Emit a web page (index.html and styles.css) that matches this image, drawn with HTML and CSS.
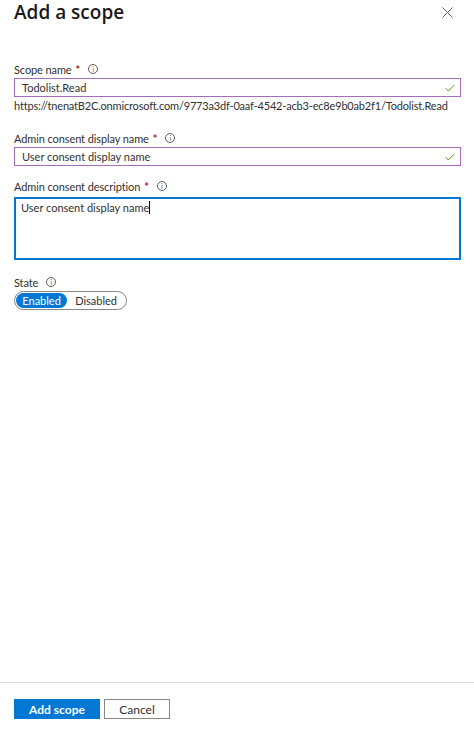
FILE: index.html
```html
<!DOCTYPE html>
<html lang="en">
<head>
    <meta charset="UTF-8">
    <meta name="viewport" content="width=device-width, initial-scale=1.0">
    <title>Add a scope</title>
    <link rel="stylesheet" href="styles.css">
</head>
<body>
    <div class="panel">
        <div class="panel-header">
            <h1 class="title">Add a scope</h1>
            <button class="close-btn" aria-label="Close">
                <svg width="11" height="11" viewBox="0 0 11 11"><path d="M0.5 0.5L10.5 10.5M10.5 0.5L0.5 10.5" stroke="#605e5c" stroke-width="1" fill="none"/></svg>
            </button>
        </div>

        <div class="panel-body">
            <div class="field">
                <label class="label">Scope name <span class="req">*</span> <span class="info">i</span></label>
                <div class="input-box valid">
                    <span class="input-text">Todolist.Read</span>
                    <svg class="check" width="10" height="8" viewBox="0 0 10 8"><path d="M0.6 4.2L3.4 7L9.4 0.8" stroke="#57a300" stroke-width="1" fill="none"/></svg>
                </div>
                <div class="hint">https://tnenatB2C.onmicrosoft.com/9773a3df-0aaf-4542-acb3-ec8e9b0ab2f1/Todolist.Read</div>
            </div>

            <div class="field">
                <label class="label">Admin consent display name <span class="req">*</span> <span class="info">i</span></label>
                <div class="input-box valid">
                    <span class="input-text">User consent display name</span>
                    <svg class="check" width="10" height="8" viewBox="0 0 10 8"><path d="M0.6 4.2L3.4 7L9.4 0.8" stroke="#57a300" stroke-width="1" fill="none"/></svg>
                </div>
            </div>

            <div class="field field-desc">
                <label class="label">Admin consent description <span class="req">*</span> <span class="info">i</span></label>
                <div class="textarea-box">
                    <span class="input-text">User consent display name</span><span class="caret"></span>
                </div>
            </div>

            <div class="field">
                <label class="label">State <span class="info">i</span></label>
                <div class="toggle">
                    <span class="toggle-opt active">Enabled</span>
                    <span class="toggle-opt">Disabled</span>
                </div>
            </div>
        </div>

        <div class="panel-footer">
            <button class="button button-primary">Add scope</button>
            <button class="button button-secondary">Cancel</button>
        </div>
    </div>
</body>
</html>
```

FILE: styles.css
```css
body {
    margin: 0;
    padding: 0;
    font-family: 'Lato', 'Open Sans', Arial, sans-serif;
    font-size: 11px;
    color: #323130;
    background: #fff;
}

.panel {
    width: 474px;
    height: 733px;
    display: flex;
    flex-direction: column;
}

.panel-header {
    display: flex;
    justify-content: space-between;
    align-items: flex-start;
    padding: 0 14px;
    height: 62px;
}

.title {
    margin: 0;
    padding-top: 1px;
    font-family: 'Open Sans', Arial, sans-serif;
    font-size: 19px;
    font-weight: 600;
    line-height: 22px;
    color: #1b1a19;
}

.close-btn {
    border: none;
    background: none;
    padding: 0;
    margin: 7px 7px 0 0;
    cursor: pointer;
    line-height: 0;
}

.panel-body {
    flex: 1;
    padding: 0 13px 0 14px;
}

.field {
    margin-bottom: 15px;
}

.field:first-child {
    margin-bottom: 18px;
}

.field:nth-child(2) {
    margin-bottom: 13px;
}

.label {
    display: flex;
    align-items: center;
    height: 14px;
    margin-bottom: 2px;
    color: #323130;
    letter-spacing: -0.1px;
}

.field-desc .label {
    margin-bottom: 4px;
}

.req {
    color: #a4262c;
    font-weight: 700;
    margin-left: 4px;
}

.info {
    display: inline-flex;
    align-items: center;
    justify-content: center;
    box-sizing: border-box;
    width: 10px;
    height: 10px;
    border: 1px solid #605e5c;
    border-radius: 50%;
    font-size: 7px;
    line-height: 1;
    margin-left: 8px;
    color: #605e5c;
}

.input-box {
    display: flex;
    align-items: center;
    justify-content: space-between;
    height: 17px;
    border: 1px solid #a56dbf;
    padding: 0 5px 0 7px;
}

.input-text {
    color: #323130;
}

.hint {
    margin-top: 2px;
    line-height: 14px;
    white-space: nowrap;
    letter-spacing: -0.18px;
}

.textarea-box {
    box-sizing: border-box;
    height: 63px;
    border: 2px solid #0078d4;
    padding: 2px 5px;
    display: flex;
    align-items: flex-start;
}

.caret {
    display: inline-block;
    width: 1px;
    height: 13px;
    background: #000;
    margin-top: 0;
}

.toggle {
    box-sizing: border-box;
    display: inline-flex;
    border: 1px solid #8a8886;
    border-radius: 10px;
    padding: 1px;
    height: 19px;
    width: 113px;
}

.toggle-opt {
    display: flex;
    align-items: center;
    justify-content: center;
    border-radius: 8px;
    padding: 0 8px;
}

.toggle-opt.active {
    width: 52px;
    box-sizing: border-box;
    padding: 0;
    background: #0078d4;
    color: #fff;
}

.panel-footer {
    border-top: 1px solid #e1dfdd;
    padding: 16px 14px 14px 14px;
    display: flex;
    gap: 4px;
}

.button {
    font-family: 'Lato', 'Open Sans', Arial, sans-serif;
    font-size: 12px;
    height: 20px;
    padding: 0;
    cursor: pointer;
}

.button-primary {
    width: 86px;
    background: #0078d4;
    color: #fff;
    border: none;
    font-weight: 700;
}

.button-secondary {
    box-sizing: border-box;
    width: 66px;
    background: #fff;
    color: #323130;
    border: 1px solid #8a8886;
}
```
